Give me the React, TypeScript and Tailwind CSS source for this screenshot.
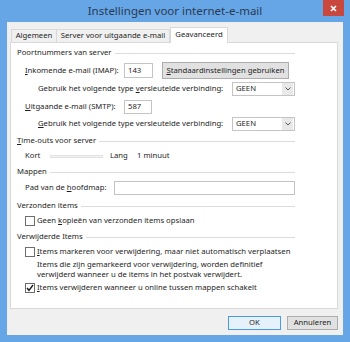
import React from "react";

// groepskop met lijn tot x=295
function GroupHeader({children, mt}: { children: React.ReactNode; mt: string }) {
    return (
        <div className={`${mt} h-[12px] ml-[6px] w-[278px] flex items-center`}>
            <span className="whitespace-nowrap">{children}</span>
            <div className="flex-1 h-px bg-[#dcdcdc] ml-[3px]"/>
        </div>
    );
}

function Select() {
    return (
        <div className="w-[63px] h-[14px] border border-[#c4c4c4] bg-white flex items-center">
            <span className="pl-[3px] flex-1 leading-none">GEEN</span>
            <div className="w-[11px] h-[12px] mr-px bg-[#e9e9e9] flex items-center justify-center">
                <svg width="6" height="4" viewBox="0 0 6 4">
                    <path d="M0.5 0.5 L3 3 L5.5 0.5" fill="none" stroke="#555" strokeWidth="1"/>
                </svg>
            </div>
        </div>
    );
}

function Checkbox({checked}: { checked?: boolean }) {
    return (
        <div className="w-[10px] h-[10px] border border-[#6d6d6d] bg-white flex items-center justify-center shrink-0">
            {checked && (
                <svg width="8" height="8" viewBox="0 0 8 8">
                    <path d="M1 4 L3 6.3 L7 1" fill="none" stroke="#1a1a1a" strokeWidth="1.4"/>
                </svg>
            )}
        </div>
    );
}

export default function App() {
    return (
        <div className="w-[350px] h-[342px] bg-[#66a6e7] flex flex-col font-['Noto_Sans',sans-serif] text-[7.7px] text-[#1e1e1e]">
            {/* titelbalk */}
            <div className="h-[22px] relative flex items-center justify-center">
                <span className="text-[11.5px] text-[#2a3a50] pb-[1px]">Instellingen voor internet-e-mail</span>
                <div className="absolute top-0 right-[6px] w-[21px] h-[16px] bg-[#c8483e] flex items-center justify-center">
                    <svg width="7" height="7" viewBox="0 0 7 7">
                        <path d="M1 1 L6 6 M6 1 L1 6" stroke="#fff" strokeWidth="1.6"/>
                    </svg>
                </div>
            </div>

            <div className="mx-[7px] h-[313px] bg-[#f0f0f0] flex flex-col">
                {/* tabbladen */}
                <div className="h-[20px] pl-[4px] flex items-end">
                    <div className="w-[46px] h-[13px] border border-b-0 border-[#d9d9d9] bg-[#f0f0f0] flex items-center justify-center">Algemeen</div>
                    <div className="w-[113px] h-[13px] border border-b-0 border-l-0 border-[#d9d9d9] bg-[#f0f0f0] flex items-center justify-center">Server voor uitgaande e-mail</div>
                    <div className="relative z-10 -mb-px w-[58px] h-[16px] border border-b-0 border-[#d9d9d9] bg-white flex items-center justify-center pb-[2px]">Geavanceerd</div>
                </div>

                {/* paneel */}
                <div className="ml-[3px] w-[328px] h-[267px] border border-[#d9d9d9] bg-white flex flex-col">
                    <GroupHeader mt="mt-[4px]">Poortnummers van server</GroupHeader>

                    <div className="mt-[3px] h-[17px] flex items-center">
                        <span className="ml-[14px] w-[99px]"><u>I</u>nkomende e-mail (IMAP):</span>
                        <div className="w-[29px] h-[15px] border border-[#c4c4c4] flex items-center pl-[3px]">143</div>
                        <div className="ml-[9px] w-[127px] h-[17px] border border-[#adadad] bg-[#e1e1e1] flex items-center justify-center">
                            <span><u>S</u>tandaardinstellingen gebruiken</span>
                        </div>
                    </div>

                    <div className="mt-[2px] h-[16px] flex items-center">
                        <span className="ml-[27px] w-[194px]">Gebruik het volgende type <u>v</u>ersleutelde verbinding:</span>
                        <Select/>
                    </div>

                    <div className="mt-[2px] h-[16px] flex items-center">
                        <span className="ml-[14px] w-[99px]"><u>U</u>itgaande e-mail (SMTP):</span>
                        <div className="w-[28px] h-[14px] border border-[#c4c4c4] flex items-center pl-[3px]">587</div>
                    </div>

                    <div className="mt-[1px] h-[16px] flex items-center">
                        <span className="ml-[27px] w-[194px]"><u>G</u>ebruik het volgende type versleutelde verbinding:</span>
                        <Select/>
                    </div>

                    <GroupHeader mt="mt-[3px]"><u>T</u>ime-outs voor server</GroupHeader>

                    <div className="mt-[3px] h-[12px] flex items-center">
                        <span className="ml-[14px] w-[25px]">Kort</span>
                        <div className="w-[53px] h-[3px] border border-[#e2e2e2] bg-[#f2f2f2]"/>
                        <span className="ml-[7px] w-[27px]">Lang</span>
                        <span>1 minuut</span>
                    </div>

                    <GroupHeader mt="mt-[4px]">Mappen</GroupHeader>

                    <div className="mt-[2px] h-[16px] flex items-center">
                        <span className="ml-[14px] w-[89px]">Pad van de <u>h</u>oofdmap:</span>
                        <div className="w-[181px] h-[14px] border border-[#c4c4c4]"/>
                    </div>

                    <GroupHeader mt="mt-[4px]">Verzonden items</GroupHeader>

                    <div className="mt-[2px] h-[14px] flex items-center pl-[14px] gap-[2px]">
                        <Checkbox/>
                        <span>Geen <u>k</u>opieën van verzonden items opslaan</span>
                    </div>

                    <GroupHeader mt="mt-[3px]">Verwijderde Items</GroupHeader>

                    <div className="mt-[2px] h-[14px] flex items-center pl-[14px] gap-[2px]">
                        <Checkbox/>
                        <span><u>I</u>tems markeren voor verwijdering, maar niet automatisch verplaatsen</span>
                    </div>

                    <div className="h-[20px] flex">
                        <p className="ml-[26px] leading-[10px]">
                            Items die zijn gemarkeerd voor verwijdering, worden definitief<br/>
                            verwijderd wanneer u de items in het postvak verwijdert.
                        </p>
                    </div>

                    <div className="mt-[2px] h-[14px] flex items-center pl-[14px] gap-[2px]">
                        <Checkbox checked/>
                        <span><u>I</u>tems verwijderen wanneer u online tussen mappen schakelt</span>
                    </div>
                </div>

                {/* knoppen */}
                <div className="mt-[7px] flex justify-end gap-[6px] pr-[5px]">
                    <div className="w-[53px] h-[14px] border border-[#4a9be0] bg-[#e5f1fb] flex items-center justify-center">OK</div>
                    <div className="w-[51px] h-[14px] border border-[#adadad] bg-[#e1e1e1] flex items-center justify-center">Annuleren</div>
                </div>
            </div>
        </div>
    );
}
